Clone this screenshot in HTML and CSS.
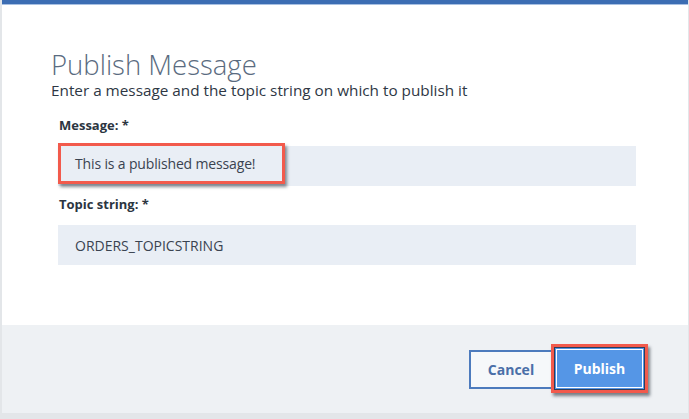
FILE: index.html
```html
<!DOCTYPE html>
<html>
<head>
<meta charset="utf-8">
<link rel="stylesheet" href="styles.css">
</head>
<body>
<div class="modal">
  <div class="topbar"></div>
  <div class="body">
    <h1 class="title">Publish Message</h1>
    <p class="subtitle">Enter a message and the topic string on which to publish it</p>
    <div class="field">
      <label class="label">Message: *</label>
      <div class="input">
        <span class="highlight">This is a published message!</span>
      </div>
    </div>
    <div class="field">
      <label class="label">Topic string: *</label>
      <div class="input"><span class="value">ORDERS_TOPICSTRING</span></div>
    </div>
  </div>
  <div class="footer">
    <button class="btn btn-secondary">Cancel</button>
    <span class="focus-ring"><button class="btn btn-primary">Publish</button></span>
  </div>
</div>
</body>
</html>
```
FILE: styles.css
```css
html, body {
  margin: 0;
  padding: 0;
}
body {
  width: 689px;
  height: 419px;
  background: #e3e6e9;
  font-family: "Open Sans", "Noto Sans", sans-serif;
  color: #2b3541;
  overflow: hidden;
}
.modal {
  margin-left: 2px;
  width: 686px;
  background: #ffffff;
  display: flex;
  flex-direction: column;
}
.topbar {
  height: 4px;
  background: #3c6db3;
  border-bottom: 1px solid #a8c0e2;
}
.body {
  height: 320px;
  box-sizing: border-box;
  padding: 43px 52px 0 49px;
}
.title {
  margin: 0;
  font-size: 27.5px;
  font-weight: 300;
  line-height: 33px;
  color: #5a6b80;
}
.subtitle {
  margin: 0;
  font-size: 15.3px;
  line-height: 18px;
  color: #2e3744;
}
.field {
  display: flex;
  flex-direction: column;
  padding-left: 7px;
}
.field:first-of-type {
  margin-top: 17px;
}
.label {
  font-size: 13px;
  font-weight: 700;
  line-height: 18px;
  margin-left: 1px;
  color: #2b3541;
}
.field + .field .label {
  margin-top: 9px;
}
.input {
  margin-top: 12px;
  height: 40px;
  width: 578px;
  background: #e9eef5;
  display: flex;
  align-items: center;
  font-size: 14px;
  color: #3a4350;
  position: relative;
}
.value {
  padding-left: 17px;
}
.highlight {
  position: relative;
  top: -3px;
  height: 41px;
  width: 227px;
  box-sizing: border-box;
  border: 3px solid #f25a4c;
  box-shadow: 2px 3px 3px rgba(40, 50, 60, 0.55);
  display: flex;
  align-items: center;
  padding-left: 14px;
  background: #e9eef5;
  letter-spacing: -0.15px;
}
.footer {
  height: 88px;
  background: #eef1f4;
  display: flex;
  align-items: center;
  justify-content: flex-end;
  padding-right: 40px;
}
.btn {
  font-family: "Open Sans", "Noto Sans", sans-serif;
  font-size: 14px;
  font-weight: 700;
  height: 39px;
  cursor: pointer;
}
.btn-secondary {
  width: 84px;
  background: #f6f8fa;
  color: #4a6fa8;
  border: 2px solid #4d7bbd;
}
.focus-ring {
  display: inline-flex;
  border: 3px solid #f25a4c;
  box-shadow: 2px 3px 3px rgba(40, 50, 60, 0.6);
  padding: 0;
  margin-left: -2px;
  margin-top: -1px;
}
.btn-primary {
  width: 91px;
  height: 43px;
  background: #5596e6;
  color: #ffffff;
  border: 1px solid #2c3e5c;
  outline: 1px solid #ffffff;
  outline-offset: -3px;
}
```
